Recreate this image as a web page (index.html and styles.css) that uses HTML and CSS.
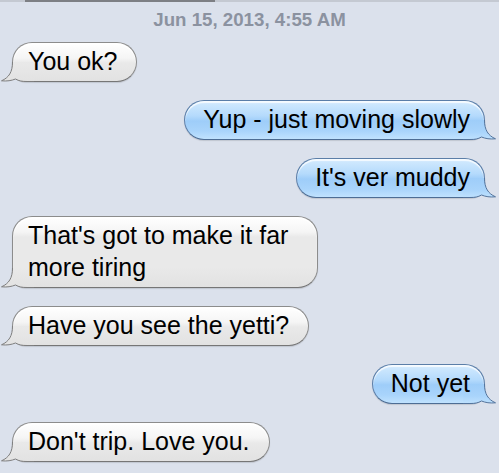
FILE: index.html
```html
<!DOCTYPE html>
<html>
<head>
<meta charset="utf-8">
<link rel="stylesheet" href="styles.css">
</head>
<body>
<svg class="defs" width="0" height="0" aria-hidden="true">
  <defs>
    <linearGradient id="g-gray" x1="0" y1="0" x2="0" y2="20" gradientUnits="userSpaceOnUse">
      <stop offset="0" stop-color="#e9e9e9"/>
      <stop offset="1" stop-color="#e2e2e2"/>
    </linearGradient>
    <linearGradient id="g-blue" x1="0" y1="0" x2="0" y2="20" gradientUnits="userSpaceOnUse">
      <stop offset="0" stop-color="#9ecdf9"/>
      <stop offset="0.6" stop-color="#a9d4fb"/>
      <stop offset="1" stop-color="#c0e2fe"/>
    </linearGradient>
  </defs>
</svg>

<div class="top-edge"><div class="top-edge-bubble"></div></div>

<div class="thread">
  <div class="date">Jun 15, 2013, 4:55 AM</div>

  <div class="messages">
    <div class="bubble in">
      <svg class="tail" viewBox="0 0 34 20"><path class="tail-fill" d="M12.5,0 C12.5,10 9,15.5 1.5,18.8 C7,19.4 11.5,18.6 15.5,17 C19,19 22,19.5 27,19.5 L34,19.5 L34,0 Z"/><path class="tail-line" d="M12.5,0 C12.5,10 9,15.5 1.5,18.8 C7,19.4 11.5,18.6 15.5,17 C19,19 22,19.5 27,19.5 L34,19.5"/></svg>
      <span class="txt">You ok?</span>
    </div>
    <div class="bubble out">
      <svg class="tail" viewBox="0 0 34 20"><path class="tail-fill" d="M12.5,0 C12.5,10 9,15.5 1.5,18.8 C7,19.4 11.5,18.6 15.5,17 C19,19 22,19.5 27,19.5 L34,19.5 L34,0 Z"/><path class="tail-line" d="M12.5,0 C12.5,10 9,15.5 1.5,18.8 C7,19.4 11.5,18.6 15.5,17 C19,19 22,19.5 27,19.5 L34,19.5"/></svg>
      <span class="txt">Yup - just moving slowly</span>
    </div>
    <div class="bubble out">
      <svg class="tail" viewBox="0 0 34 20"><path class="tail-fill" d="M12.5,0 C12.5,10 9,15.5 1.5,18.8 C7,19.4 11.5,18.6 15.5,17 C19,19 22,19.5 27,19.5 L34,19.5 L34,0 Z"/><path class="tail-line" d="M12.5,0 C12.5,10 9,15.5 1.5,18.8 C7,19.4 11.5,18.6 15.5,17 C19,19 22,19.5 27,19.5 L34,19.5"/></svg>
      <span class="txt">It's ver muddy</span>
    </div>
    <div class="bubble in">
      <svg class="tail" viewBox="0 0 34 20"><path class="tail-fill" d="M12.5,0 C12.5,10 9,15.5 1.5,18.8 C7,19.4 11.5,18.6 15.5,17 C19,19 22,19.5 27,19.5 L34,19.5 L34,0 Z"/><path class="tail-line" d="M12.5,0 C12.5,10 9,15.5 1.5,18.8 C7,19.4 11.5,18.6 15.5,17 C19,19 22,19.5 27,19.5 L34,19.5"/></svg>
      <span class="txt">That's got to make it far more tiring</span>
    </div>
    <div class="bubble in">
      <svg class="tail" viewBox="0 0 34 20"><path class="tail-fill" d="M12.5,0 C12.5,10 9,15.5 1.5,18.8 C7,19.4 11.5,18.6 15.5,17 C19,19 22,19.5 27,19.5 L34,19.5 L34,0 Z"/><path class="tail-line" d="M12.5,0 C12.5,10 9,15.5 1.5,18.8 C7,19.4 11.5,18.6 15.5,17 C19,19 22,19.5 27,19.5 L34,19.5"/></svg>
      <span class="txt">Have you see the yetti?</span>
    </div>
    <div class="bubble out">
      <svg class="tail" viewBox="0 0 34 20"><path class="tail-fill" d="M12.5,0 C12.5,10 9,15.5 1.5,18.8 C7,19.4 11.5,18.6 15.5,17 C19,19 22,19.5 27,19.5 L34,19.5 L34,0 Z"/><path class="tail-line" d="M12.5,0 C12.5,10 9,15.5 1.5,18.8 C7,19.4 11.5,18.6 15.5,17 C19,19 22,19.5 27,19.5 L34,19.5"/></svg>
      <span class="txt">Not yet</span>
    </div>
    <div class="bubble in">
      <svg class="tail" viewBox="0 0 34 20"><path class="tail-fill" d="M12.5,0 C12.5,10 9,15.5 1.5,18.8 C7,19.4 11.5,18.6 15.5,17 C19,19 22,19.5 27,19.5 L34,19.5 L34,0 Z"/><path class="tail-line" d="M12.5,0 C12.5,10 9,15.5 1.5,18.8 C7,19.4 11.5,18.6 15.5,17 C19,19 22,19.5 27,19.5 L34,19.5"/></svg>
      <span class="txt">Don't trip. Love you.</span>
    </div>
  </div>
</div>
</body>
</html>
```

FILE: styles.css
```css
html, body {
  margin: 0;
  padding: 0;
}

body {
  background: #dbe1ec;
  font-family: "Liberation Sans", Arial, Helvetica, sans-serif;
  width: 499px;
  height: 473px;
  overflow: hidden;
}

.defs {
  position: absolute;
  width: 0;
  height: 0;
  overflow: hidden;
}

.top-edge {
  height: 2px;
  background: #c4c9d2;
}

.top-edge-bubble {
  margin-left: 25px;
  width: 190px;
  height: 2px;
  background: #7d7f84;
}

.thread {
  display: flex;
  flex-direction: column;
}

.date {
  padding-top: 7px;
  margin-bottom: 11px;
  text-align: center;
  font-size: 18.7px;
  line-height: 22px;
  font-weight: bold;
  color: #8b92a0;
}

.messages {
  display: flex;
  flex-direction: column;
  gap: 18px;
}

.bubble {
  position: relative;
  box-sizing: border-box;
  max-width: 306px;
  font-size: 25px;
  line-height: 32px;
  color: #000;
  border: 1px solid #8a8a8a;
  border-radius: 20px;
}

.txt {
  position: relative;
  z-index: 1;
}

.tail {
  position: absolute;
  bottom: -1px;
  width: 34px;
  height: 20px;
  overflow: visible;
}

.tail-line {
  fill: none;
  stroke-width: 1;
}

.in {
  align-self: flex-start;
  margin-left: 12px;
  padding: 2px 19px 4px 15px;
  border-bottom-left-radius: 14px;
  border-color: #8c8c8c #8c8c8c #767676;
  background: linear-gradient(to bottom, #ffffff 0, #f5f5f5 15px, #e9e9e9 20px, #e9e9e9 calc(100% - 20px), #e2e2e2 100%);
  box-shadow: inset 0 2px 1px rgba(255, 255, 255, 0.95), 0 1px 1px rgba(0, 0, 0, 0.12);
}

.in .tail {
  left: -13px;
}

.in .tail-fill {
  fill: url(#g-gray);
}

.in .tail-line {
  stroke: #7e7e7e;
}

.out {
  align-self: flex-end;
  margin-right: 14px;
  padding: 2px 14px 4px 18px;
  border-bottom-right-radius: 14px;
  border-color: #5b7ea8 #5b7ea8 #4d6d94;
  background: linear-gradient(to bottom, #d4ebfe 0, #b4dafc 15px, #9ecdf9 20px, #9ecdf9 calc(100% - 20px), #a9d4fb calc(100% - 8px), #c0e2fe 100%);
  box-shadow: inset 0 2px 1px rgba(255, 255, 255, 0.8), 0 1px 1px rgba(0, 0, 0, 0.12);
}

.out .tail {
  right: -13px;
  transform: scaleX(-1);
}

.out .tail-fill {
  fill: url(#g-blue);
}

.out .tail-line {
  stroke: #54749c;
}
```
